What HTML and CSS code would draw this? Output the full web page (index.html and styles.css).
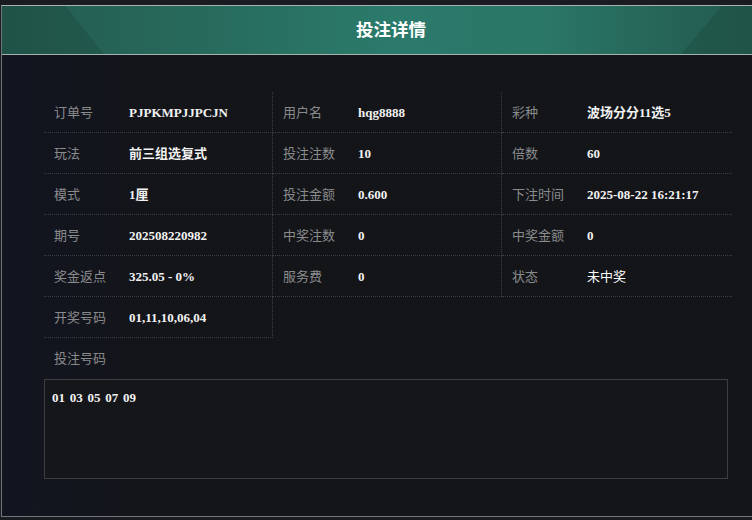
FILE: index.html
```html
<!DOCTYPE html>
<html lang="zh">
<head>
<meta charset="utf-8">
<title>投注详情</title>
<link rel="stylesheet" href="styles.css">
</head>
<body>
<div class="modal">
  <div class="header"><h1 class="title">投注详情</h1></div>
  <div class="content">
    <div class="grid">
      <div class="cell"><span class="label">订单号</span><span class="value">PJPKMPJJPCJN</span></div>
      <div class="cell"><span class="label">用户名</span><span class="value">hqg8888</span></div>
      <div class="cell last"><span class="label">彩种</span><span class="value">波场分分11选5</span></div>

      <div class="cell"><span class="label">玩法</span><span class="value">前三组选复式</span></div>
      <div class="cell"><span class="label">投注注数</span><span class="value">10</span></div>
      <div class="cell last"><span class="label">倍数</span><span class="value">60</span></div>

      <div class="cell"><span class="label">模式</span><span class="value">1厘</span></div>
      <div class="cell"><span class="label">投注金额</span><span class="value">0.600</span></div>
      <div class="cell last"><span class="label">下注时间</span><span class="value">2025-08-22 16:21:17</span></div>

      <div class="cell"><span class="label">期号</span><span class="value">202508220982</span></div>
      <div class="cell"><span class="label">中奖注数</span><span class="value">0</span></div>
      <div class="cell last"><span class="label">中奖金额</span><span class="value">0</span></div>

      <div class="cell"><span class="label">奖金返点</span><span class="value">325.05 - 0%</span></div>
      <div class="cell"><span class="label">服务费</span><span class="value">0</span></div>
      <div class="cell last"><span class="label">状态</span><span class="value plain">未中奖</span></div>

      <div class="cell"><span class="label">开奖号码</span><span class="value">01,11,10,06,04</span></div>
    </div>
    <div class="bet-label"><span class="label">投注号码</span></div>
    <div class="bet-box">01 03 05 07 09</div>
  </div>
</div>
</body>
</html>
```

FILE: styles.css
```css
* { box-sizing: border-box; }
html, body {
  margin: 0;
  padding: 0;
  background: #1a1c21;
  overflow: hidden;
}
body {
  padding-top: 5px;
  padding-left: 1px;
  height: 520px;
  font-family: "Noto Sans CJK SC", "Noto Sans", sans-serif;
}
.modal {
  width: 780px;
  height: 512px;
  border: 1px solid #70777b;
  border-top-color: #a9b3b1;
  background: linear-gradient(90deg, #121520 0%, #131519 20%, #131519 100%);
  display: flex;
  flex-direction: column;
}
.header {
  position: relative;
  height: 49px;
  padding-bottom: 3px;
  border-bottom: 1px solid #a7b3b0;
  background: linear-gradient(90deg, #245b4f 0%, #276a5c 25%, #2b7a6b 50%, #2a7667 70%, #256255 88%, #225a4d 100%);
  display: flex;
  align-items: center;
  justify-content: center;
  overflow: hidden;
}
.header::before {
  content: "";
  position: absolute;
  left: 0;
  top: 0;
  bottom: 0;
  width: 102px;
  background: rgba(18, 50, 42, 0.2);
  clip-path: polygon(0 0, 62% 0, 100% 100%, 0 100%);
}
.header::after {
  content: "";
  position: absolute;
  left: 679px;
  top: 0;
  bottom: 0;
  width: 120px;
  background: rgba(18, 50, 42, 0.2);
  clip-path: polygon(34% 0, 100% 0, 100% 100%, 0 100%);
}
.title {
  position: relative;
  z-index: 1;
  margin: 0;
  font-size: 17.5px;
  font-weight: bold;
  color: #ffffff;
}
.content {
  padding: 37px 0 0 42px;
}
.grid {
  width: 688px;
  display: grid;
  grid-template-columns: 229px 229px 230px;
  grid-auto-rows: 41px;
}
.cell {
  padding-left: 10px;
  line-height: 37px;
  white-space: nowrap;
  border-bottom: 1px dotted #3c3f44;
  border-right: 1px dotted #3c3f44;
}
.cell.last { border-right: none; }
.label {
  display: inline-block;
  width: 75px;
  font-size: 13px;
  color: #8a8b8d;
  vertical-align: baseline;
}
.value {
  font-family: "Liberation Serif", "Noto Sans CJK SC", serif;
  font-weight: bold;
  font-size: 13px;
  color: #f2f2f2;
}
.value.plain {
  font-family: "Noto Sans CJK SC", sans-serif;
  font-weight: normal;
  color: #ffffff;
}
.bet-label {
  height: 41px;
  line-height: 37px;
  padding-left: 10px;
}
.bet-box {
  width: 684px;
  height: 100px;
  border: 1px solid #3a3d42;
  background: #14161a;
  padding: 10px 7px;
  font-family: "Liberation Serif", serif;
  font-weight: bold;
  font-size: 13px;
  word-spacing: 1.5px;
  color: #f2f2f2;
}
```
